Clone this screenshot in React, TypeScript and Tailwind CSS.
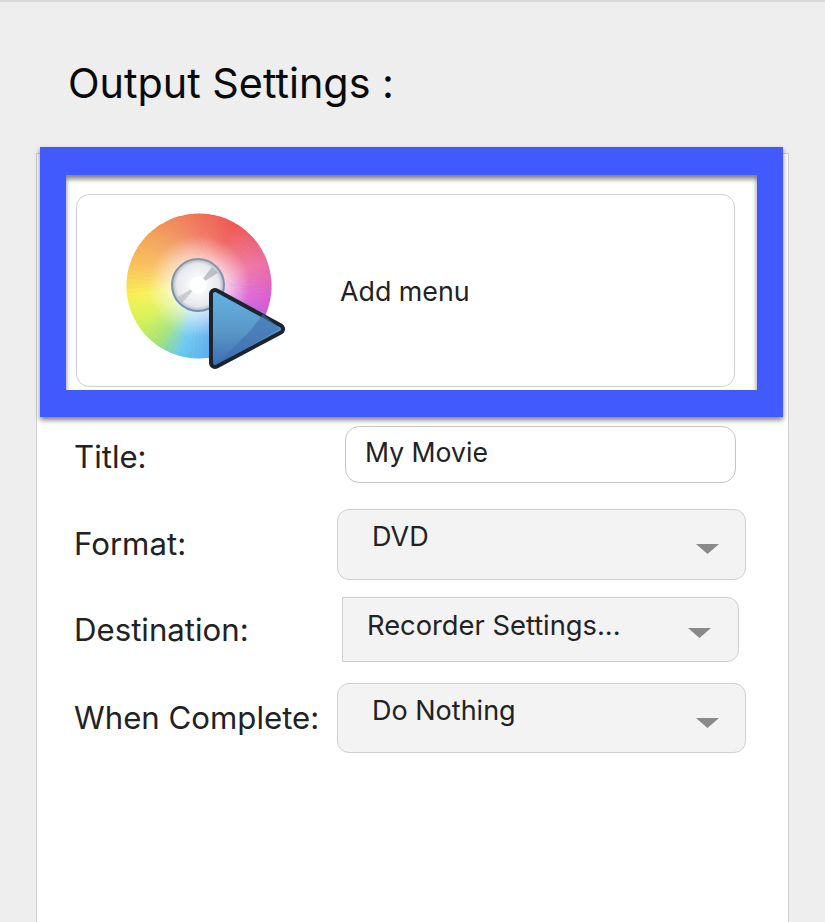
const wedgeStops: [number, number[]][] = [
  [0, [240, 112, 88]],
  [30, [238, 88, 82]],
  [70, [236, 110, 160]],
  [100, [220, 92, 208]],
  [125, [176, 96, 224]],
  [170, [90, 170, 240]],
  [195, [104, 200, 240]],
  [215, [160, 226, 120]],
  [240, [216, 242, 80]],
  [262, [248, 240, 80]],
  [288, [248, 192, 84]],
  [325, [242, 152, 88]],
  [360, [240, 112, 88]],
]

function colorAt(angle: number) {
  for (let i = 0; i < wedgeStops.length - 1; i++) {
    const [a, ca] = wedgeStops[i]
    const [b, cb] = wedgeStops[i + 1]
    if (angle >= a && angle <= b) {
      const t = (angle - a) / (b - a)
      const mix = ca.map((v, k) => Math.round(v + (cb[k] - v) * t))
      return `rgb(${mix[0]},${mix[1]},${mix[2]})`
    }
  }
  return 'rgb(240,112,88)'
}

function DiscIcon() {
  const cx = 79
  const cy = 80
  const r = 72.5
  const wedges = []
  for (let a = 0; a < 360; a += 4) {
    const a1 = ((a - 90) * Math.PI) / 180
    const a2 = ((a + 4.6 - 90) * Math.PI) / 180
    wedges.push(
      <path
        key={a}
        d={`M${cx} ${cy}L${cx + r * Math.cos(a1)} ${cy + r * Math.sin(a1)}A${r} ${r} 0 0 1 ${cx + r * Math.cos(a2)} ${cy + r * Math.sin(a2)}Z`}
        fill={colorAt(a + 2)}
      />
    )
  }

  return (
    <svg width="170" height="170" viewBox="0 0 170 170" className="shrink-0">
      <defs>
        <radialGradient id="sheen" gradientUnits="userSpaceOnUse" cx="79" cy="80" r="72.5">
          <stop offset="0.35" stopColor="#fff" stopOpacity="0.7" />
          <stop offset="0.7" stopColor="#fff" stopOpacity="0.1" />
          <stop offset="1" stopColor="#fff" stopOpacity="0" />
        </radialGradient>
        <radialGradient id="hub" cx="0.5" cy="0.5" r="0.5">
          <stop offset="0.3" stopColor="#f8f9fb" />
          <stop offset="0.82" stopColor="#e6e8ec" />
          <stop offset="1" stopColor="#aeb6c2" />
        </radialGradient>
        <linearGradient id="hubRing" x1="0" y1="0" x2="0" y2="1">
          <stop offset="0" stopColor="#8c95a3" />
          <stop offset="1" stopColor="#6f8db8" />
        </linearGradient>
        <linearGradient id="play" gradientUnits="userSpaceOnUse" x1="95" y1="85" x2="95" y2="160">
          <stop offset="0" stopColor="#62b4e4" />
          <stop offset="0.55" stopColor="#5a96c8" />
          <stop offset="1" stopColor="#3c6cb2" />
        </linearGradient>
      </defs>
      {wedges}
      <circle cx={cx} cy={cy} r={r} fill="url(#sheen)" />
      <circle cx="78" cy="79" r="26" fill="url(#hub)" stroke="url(#hubRing)" strokeWidth="2" />
      <path d="M78 79L92 61L98 67Z" fill="#a9acb4" opacity="0.7" />
      <path d="M78 79L62 97L58 91Z" fill="#b4b6bc" opacity="0.6" />
      <circle cx="78" cy="79" r="8.5" fill="#fff" />
      <path d="M95 88L95 157L159 123Z" fill="#1c2430" stroke="#1c2430" strokeWidth="12" strokeLinejoin="round" />
      <path d="M95 88L95 157L159 123Z" fill="url(#play)" stroke="url(#play)" strokeWidth="4" strokeLinejoin="round" />
      <path d="M143 108L160 123L97 158L130 125Z" fill="#3f6fb0" opacity="0.6" />
    </svg>
  )
}

function Arrow() {
  return (
    <svg width="23" height="10" viewBox="0 0 23 10">
      <path d="M0 0H23L11.5 10Z" fill="#8a8a8a" />
    </svg>
  )
}

export default function App() {
  return (
    <div className="h-[922px] overflow-hidden border-t-2 border-[#d8d8d8] bg-[#eeeeee] font-['Inter','Liberation_Sans',sans-serif]">
      <h1 className="pl-[68px] pt-[58px] text-[41.3px] leading-[46px] font-normal text-[#0a0a0a]">Output Settings :</h1>

      <div className="ml-[36px] mt-[47px] h-[800px] w-[753px] border border-[#cfcfcf] bg-white">
        {/* blue highlight round the menu card */}
        <div className="-mt-[7px] ml-[3px] h-[270px] w-[743px] border-x-[26px] border-t-[28px] border-b-[27px] border-[#415afd] bg-white px-[10px] pt-[19px] shadow-[0_3px_5px_rgba(0,0,0,0.5),inset_0_4px_5px_rgba(0,0,0,0.5)]">
          <div className="flex h-[193px] w-[659px] items-center rounded-[13px] border border-[#cfcfcf] bg-white pl-[43px]">
            <DiscIcon />
            <span className="ml-[50px] pt-[2px] text-[26.8px] text-[#222222]">Add menu</span>
          </div>
        </div>

        <div className="mt-[9px] flex h-[57px] items-center pl-[37px]">
          <span className="w-[271px] pt-[5px] text-[31.2px] text-[#222222]">Title:</span>
          <div className="flex h-[57px] w-[391px] rounded-[14px] border border-[#c6c6c6] bg-white pl-[19px] pt-[6px] text-[26.6px] leading-[38px] text-[#222222]">
            My Movie
          </div>
        </div>

        <div className="mt-[26px] flex h-[71px] items-center pl-[37px]">
          <span className="w-[263px] text-[31.2px] text-[#222222]">Format:</span>
          <div className="flex h-[71px] w-[409px] justify-between rounded-[12px] border border-[#cfcfcf] bg-[#f3f3f3] pl-[34px] pr-[26px] pt-[8px] text-[27px] leading-[38px] text-[#222222]">
            DVD
            <span className="pt-[26px]"><Arrow /></span>
          </div>
        </div>

        <div className="mt-[17px] flex h-[65px] items-center pl-[37px]">
          <span className="w-[268px] pt-[2px] text-[31.2px] text-[#222222]">Destination:</span>
          <div className="flex h-[65px] w-[397px] justify-between rounded-r-[12px] border border-[#cfcfcf] bg-[#f3f3f3] pl-[24px] pr-[27px] pt-[9px] text-[27.3px] leading-[38px] text-[#222222]">
            Recorder Settings...
            <span className="pt-[21px]"><Arrow /></span>
          </div>
        </div>

        <div className="mt-[21px] flex h-[70px] items-center pl-[37px]">
          <span className="w-[263px] whitespace-nowrap text-[31.2px] text-[#222222]">When Complete:</span>
          <div className="flex h-[70px] w-[409px] justify-between rounded-[12px] border border-[#cfcfcf] bg-[#f3f3f3] pl-[34px] pr-[26px] pt-[8px] text-[27px] leading-[38px] text-[#222222]">
            Do Nothing
            <span className="pt-[26px]"><Arrow /></span>
          </div>
        </div>
      </div>
    </div>
  )
}
